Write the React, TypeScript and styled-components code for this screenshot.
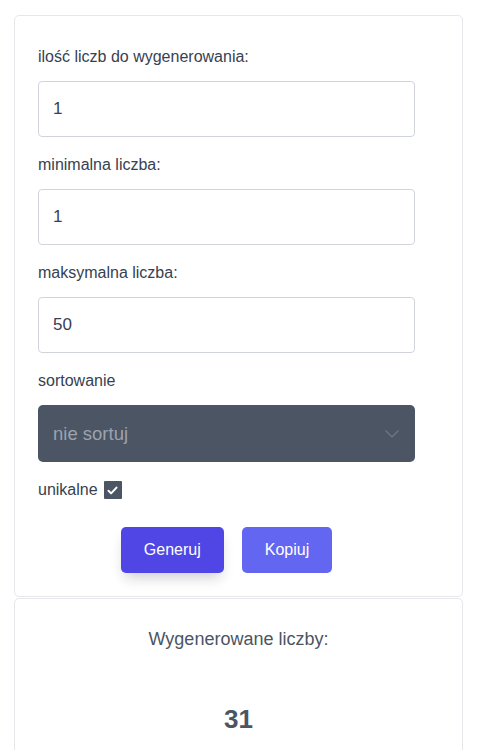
import React from "react";
import styled, { createGlobalStyle } from "styled-components";

const Global = createGlobalStyle`
  html, body { margin: 0; padding: 0; background: #ffffff; }
  body { font-family: "Liberation Sans", Arial, Helvetica, sans-serif; }
  * { box-sizing: border-box; }
`;

const Page = styled.div`
  display: flex;
  flex-direction: column;
  gap: 1px;
  padding: 15px 14px 0 14px;
  width: 477px;
`;

const Card = styled.section`
  background: #ffffff;
  border: 1px solid #e5e7eb;
  border-radius: 5px;
  width: 449px;
`;

const FormCard = styled(Card)`
  padding: 29px 47px 23px 23px;
`;

const Form = styled.form`
  display: flex;
  flex-direction: column;
  width: 377px;
`;

const Label = styled.label`
  display: block;
  font-size: 16px;
  line-height: 24px;
  color: #374151;
  margin-bottom: 12px;
`;

const Input = styled.input`
  display: block;
  width: 100%;
  height: 56px;
  border: 1px solid #d1d5db;
  border-radius: 4px;
  padding: 0 14px;
  font-family: inherit;
  font-size: 17px;
  color: #374151;
  background: #ffffff;
  margin-bottom: 16px;
  outline: none;
`;

const SelectBox = styled.div`
  display: flex;
  align-items: center;
  justify-content: space-between;
  height: 57px;
  width: 100%;
  background: #4b5563;
  border-radius: 5px;
  padding: 0 16px 0 15px;
  color: #9ca3af;
  font-size: 18.5px;
  margin-bottom: 16px;
`;

const CheckRow = styled.label`
  display: flex;
  align-items: center;
  gap: 6px;
  font-size: 16px;
  line-height: 24px;
  color: #374151;
`;

const CheckBox = styled.span`
  display: inline-flex;
  align-items: center;
  justify-content: center;
  width: 18px;
  height: 18px;
  background: #4b5563;
  border-radius: 1px;
`;

const Buttons = styled.div`
  display: flex;
  justify-content: center;
  gap: 18px;
  margin-top: 25px;
`;

const Button = styled.button<{ $primary?: boolean }>`
  height: 46px;
  padding: 0 23px;
  border: none;
  border-radius: 5px;
  font-family: inherit;
  font-size: 16px;
  color: #ffffff;
  background: ${(p) => (p.$primary ? "#4f46e5" : "#6366f1")};
  box-shadow: ${(p) =>
    p.$primary ? "0 8px 14px -4px rgba(17, 24, 39, 0.22)" : "none"};
  cursor: pointer;
`;

const ResultCard = styled(Card)`
  display: flex;
  flex-direction: column;
  align-items: center;
  padding: 28px 24px 40px;
  min-height: 200px;
`;

const ResultTitle = styled.h2`
  margin: 0;
  font-size: 18px;
  font-weight: 400;
  line-height: 24px;
  color: #4b5563;
`;

const ResultNumber = styled.div`
  margin-top: 52px;
  font-size: 26px;
  font-weight: 700;
  line-height: 32px;
  color: #4b5563;
`;

export default function App() {
  return (
    <>
      <Global />
      <Page>
        <FormCard>
          <Form onSubmit={(e) => e.preventDefault()}>
            <Label>ilość liczb do wygenerowania:</Label>
            <Input defaultValue="1" />
            <Label>minimalna liczba:</Label>
            <Input defaultValue="1" />
            <Label>maksymalna liczba:</Label>
            <Input defaultValue="50" />
            <Label>sortowanie</Label>
            <SelectBox>
              <span>nie sortuj</span>
              <svg width="14" height="8" viewBox="0 0 14 8" fill="none">
                <path
                  d="M1 1l6 6 6-6"
                  stroke="#6b7280"
                  strokeWidth="1.6"
                  strokeLinecap="round"
                  strokeLinejoin="round"
                />
              </svg>
            </SelectBox>
            <CheckRow>
              unikalne
              <CheckBox>
                <svg width="11" height="9" viewBox="0 0 11 9" fill="none">
                  <path
                    d="M1.5 4.8l2.6 2.6L9.5 1.6"
                    stroke="#ffffff"
                    strokeWidth="2"
                    strokeLinecap="round"
                    strokeLinejoin="round"
                  />
                </svg>
              </CheckBox>
            </CheckRow>
            <Buttons>
              <Button $primary type="button">Generuj</Button>
              <Button type="button">Kopiuj</Button>
            </Buttons>
          </Form>
        </FormCard>
        <ResultCard>
          <ResultTitle>Wygenerowane liczby:</ResultTitle>
          <ResultNumber>31</ResultNumber>
        </ResultCard>
      </Page>
    </>
  );
}
